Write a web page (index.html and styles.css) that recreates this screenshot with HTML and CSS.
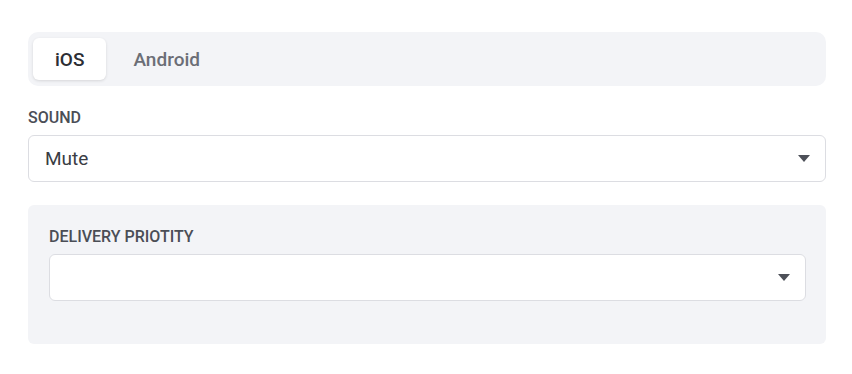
FILE: index.html
```html
<!DOCTYPE html>
<html>
<head>
<meta charset="utf-8">
<link rel="stylesheet" href="styles.css">
</head>
<body>
<div class="page">
  <div class="tabs">
    <div class="tab active">iOS</div>
    <div class="tab">Android</div>
  </div>
  <div class="field">
    <div class="label">SOUND</div>
    <div class="select">
      <span class="value">Mute</span>
      <span class="caret"></span>
    </div>
  </div>
  <div class="panel">
    <div class="label">DELIVERY PRIOTITY</div>
    <div class="select">
      <span class="value"></span>
      <span class="caret"></span>
    </div>
  </div>
</div>
</body>
</html>
```
FILE: styles.css
```css
* { box-sizing: border-box; }
html, body { margin: 0; background: #fff; }
body { font-family: Roboto, "Noto Sans", sans-serif; color: #2c2e34; }
.page { padding: 32px 26px 0 28px; display: flex; flex-direction: column; }
.tabs {
  display: flex; gap: 5px; padding: 6px 5px; height: 54px;
  background: #f3f4f7; border-radius: 10px;
}
.tab {
  display: flex; align-items: center; justify-content: center;
  padding: 0 22px; font-size: 19px; font-weight: 500; color: #6b6e76;
  border-radius: 6px;
}
.tab.active { background: #fff; color: #2c2e34; box-shadow: 0 1px 3px rgba(0,0,0,0.12); }
.field { margin-top: 22px; display: flex; flex-direction: column; }
.label { font-size: 16px; font-weight: 500; color: #4b4e56; line-height: 19px; margin-bottom: 8px; }
.select {
  display: flex; align-items: center; justify-content: space-between;
  height: 47px; border: 1px solid #dcdde2; border-radius: 6px; background: #fff;
  padding: 0 15px 0 16px;
}
.value { font-size: 19px; color: #3a3d44; }
.caret {
  width: 0; height: 0; border-left: 6.5px solid transparent; border-right: 6.5px solid transparent;
  border-top: 7px solid #4d5058;
}
.panel {
  margin-top: 23px; background: #f3f4f7; border-radius: 6px;
  padding: 22px 20px 43px 21px; display: flex; flex-direction: column;
}
```
